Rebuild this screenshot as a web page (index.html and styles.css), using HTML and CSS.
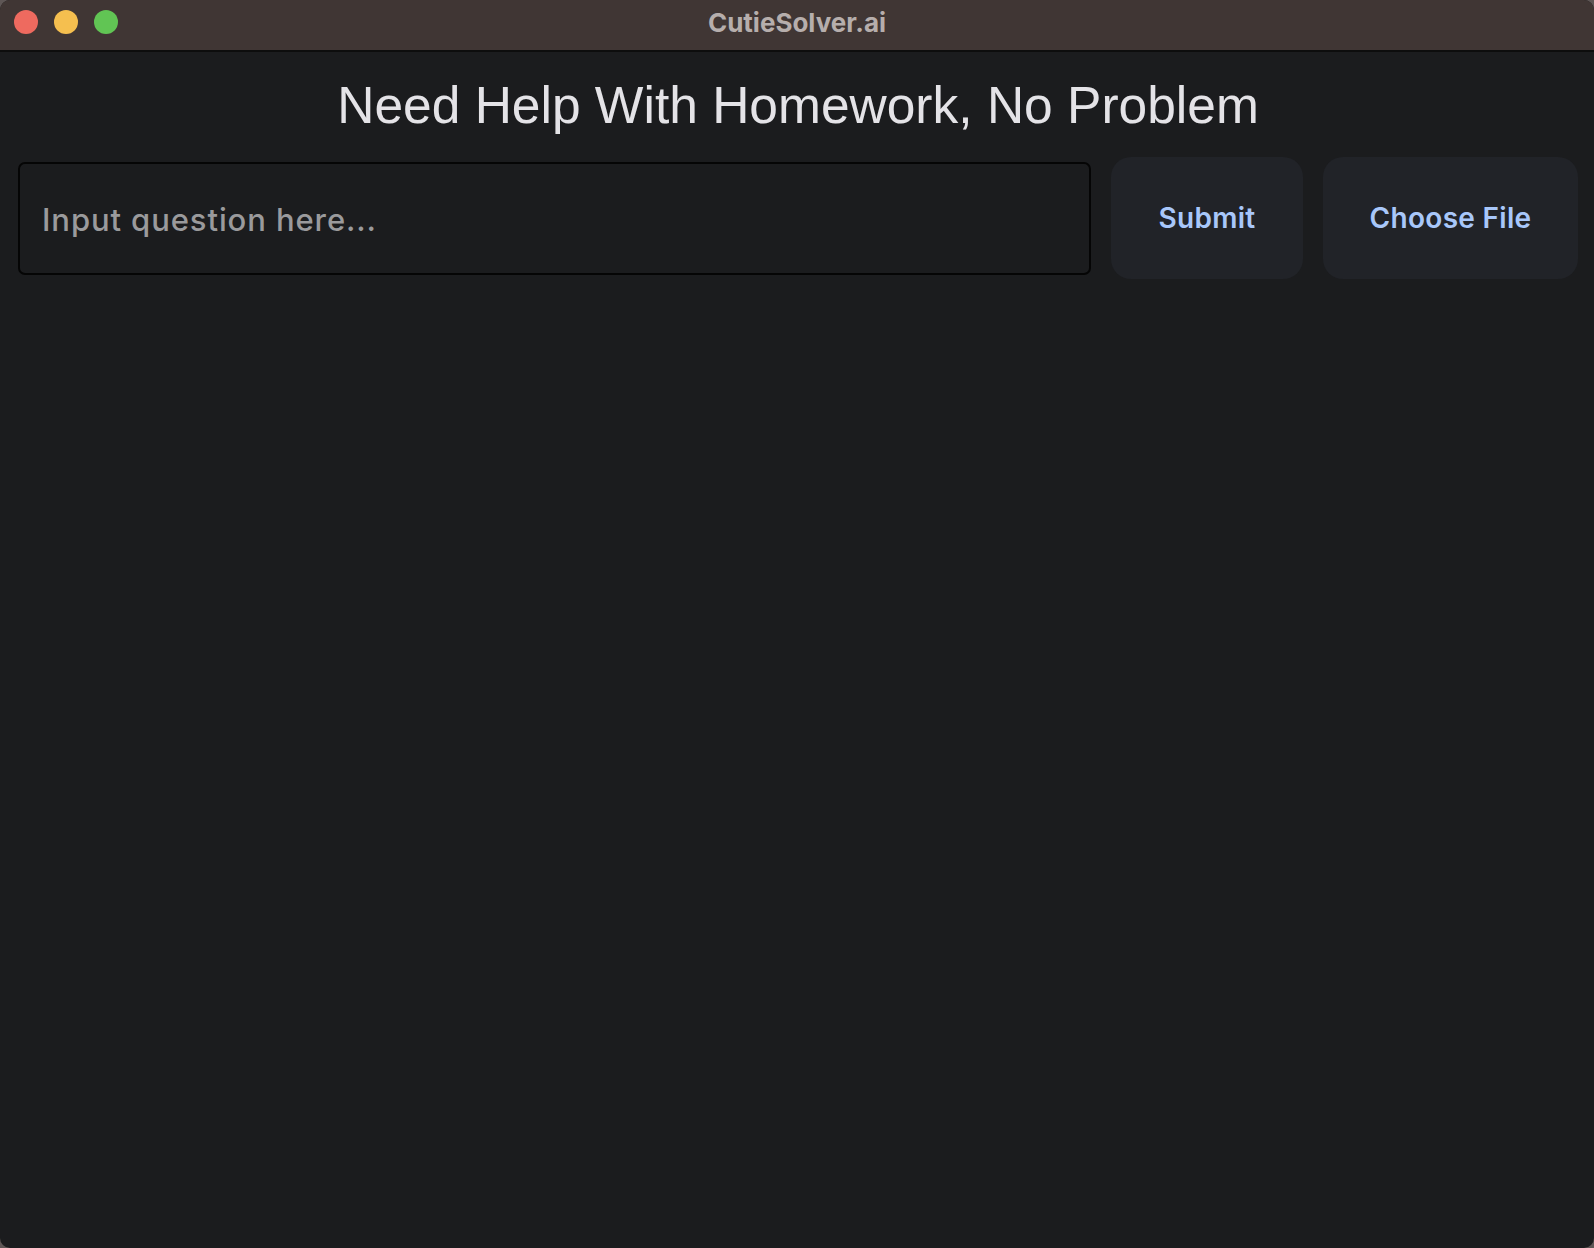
FILE: index.html
```html
<!DOCTYPE html>
<html lang="en">
<head>
    <meta charset="UTF-8">
    <meta name="viewport" content="width=device-width, initial-scale=1.0">
    <title>CutieSolver.ai</title>
    <link rel="stylesheet" href="styles.css">
</head>
<body>
    <div class="window">
        <div class="titlebar">
            <div class="lights">
                <span class="light red"></span>
                <span class="light yellow"></span>
                <span class="light green"></span>
            </div>
            <div class="window-title">CutieSolver.ai</div>
        </div>

        <div class="content">
            <h1>Need Help With Homework, No Problem</h1>

            <div class="ask-row">
                <input type="text" class="question-input" placeholder="Input question here...">
                <button class="action-button submit-button">Submit</button>
                <button class="action-button file-button">Choose File</button>
            </div>
        </div>
    </div>
</body>
</html>
```

FILE: styles.css
```css
html, body {
    height: 100%;
}

body {
    margin: 0;
    background-color: #5e5655;
    font-family: Inter, "Noto Sans", sans-serif;
}

.window {
    height: 100%;
    display: flex;
    flex-direction: column;
    background: #1b1c1e;
    border-radius: 10px;
    overflow: hidden;
}

.titlebar {
    position: relative;
    height: 50px;
    flex-shrink: 0;
    background: #403634;
    border-bottom: 2px solid #0d0d0d;
    display: flex;
    align-items: center;
    justify-content: center;
}

.lights {
    position: absolute;
    left: 14px;
    top: 10px;
    display: flex;
    gap: 16px;
}

.light {
    width: 24px;
    height: 24px;
    border-radius: 50%;
}

.red { background: #ee6a5f; }
.yellow { background: #f5bf4f; }
.green { background: #61c554; }

.window-title {
    color: #b6aeac;
    font-size: 26px;
    font-weight: 700;
    margin-top: -5px;
}

.content {
    flex: 1;
    padding: 0 16px 0 18px;
}

h1 {
    margin: 24px 0 0;
    text-align: center;
    font-family: "Liberation Sans", Arial, sans-serif;
    font-weight: 400;
    font-size: 51.5px;
    line-height: 58px;
    color: #e4e3e7;
}

.ask-row {
    display: flex;
    align-items: center;
    gap: 20px;
    margin-top: 23px;
}

.question-input {
    flex: 1;
    height: 113px;
    box-sizing: border-box;
    padding: 2px 22px 0;
    background: #1b1c1e;
    border: 2px solid #050505;
    border-radius: 7px;
    font-family: Inter, "Noto Sans", sans-serif;
    font-size: 31px;
    font-weight: 500;
    letter-spacing: 0.9px;
    color: #e4e3e7;
    outline: none;
}

.question-input::placeholder {
    color: #9a9a9c;
}

.action-button {
    height: 122px;
    border: none;
    border-radius: 20px;
    background: #212328;
    color: #a8c7fa;
    font-family: Inter, "Noto Sans", sans-serif;
    font-size: 28px;
    font-weight: 600;
    letter-spacing: 0.3px;
    cursor: pointer;
}

.submit-button {
    width: 192px;
}

.file-button {
    width: 255px;
}
```
